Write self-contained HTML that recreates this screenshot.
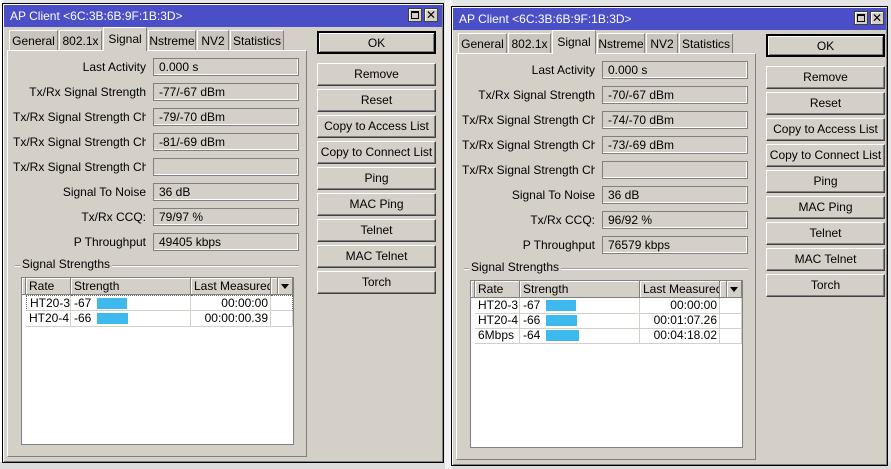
<!DOCTYPE html>
<html><head><meta charset="utf-8"><style>
*{box-sizing:border-box;margin:0;padding:0}
body{width:891px;height:469px;overflow:hidden;background:#e6e6e6;position:relative;font-family:"Liberation Sans","DejaVu Sans",sans-serif;font-size:11px;color:#000}
.win{position:absolute;width:442px;height:460px;background:#d4d0c8;border:1px solid #000;box-shadow:inset 1px 1px 0 #fff,inset -1px -1px 0 #808080}
.win div{position:absolute}
.tb{left:1px;top:1px;right:1px;height:22px;background:#4b4fc7;color:#fff;font-size:12px;line-height:22px;padding-left:6px}
.tbb{top:4px;width:14px;height:14px;background:#d4d0c8;border:1px solid #404040;box-shadow:inset 1px 1px 0 #fff}
.tab{top:26px;height:21px;background:#c9c5bd;border:1px solid #fff;border-right-color:#808080;border-bottom:none;line-height:20px;text-align:center;font-size:12px}
.tab.sel{top:23px;height:24px;background:#d4d0c8;z-index:2;line-height:22px}
.panel{left:4px;top:46px;width:300px;height:407px;border:1px solid #fff;border-right-color:#808080;border-bottom-color:#808080}
.lbl{left:10px;width:133px;text-align:right;white-space:nowrap;overflow:hidden;height:18px;line-height:18px;font-size:12px}
.fld{left:150px;width:146px;height:18px;border:1px solid #808080;box-shadow:inset -1px -1px 0 #fff;line-height:16px;padding-left:5px;font-size:12px}
.btn{left:314px;width:119px;height:23px;border:1px solid #fff;border-right-color:#404040;border-bottom-color:#404040;box-shadow:inset -1px -1px 0 #808080;text-align:center;line-height:21px;font-size:12px}
.btn.ok{border:2px solid #000;box-shadow:inset 1px 1px 0 #fff,inset -1px -1px 0 #808080}
.grp{left:12px;top:261px;width:284px;height:1px;background:#a0a0a0;box-shadow:0 1px 0 #fff}
.grpt{left:17px;top:253px;background:#d4d0c8;padding:0 2px;font-size:12px}
.tbl{left:18px;top:273px;width:273px;height:168px;background:#fff;border:1px solid #808080}
.hd{top:0;height:17px;background:#d4d0c8;border-right:1px solid #808080;border-bottom:1px solid #808080;box-shadow:inset 1px 1px 0 #fff;line-height:16px;padding-left:3px;font-size:12px;white-space:nowrap;overflow:hidden}
.c{height:16px;line-height:15px;border-right:1px solid #d4d0c8;border-bottom:1px solid #d4d0c8;padding-left:3px;font-size:12px;white-space:nowrap}
.bar{width:30px;height:11px;top:2px;left:26px;background:#3db9ee}
</style></head><body>
<div style="position:absolute;left:0;top:0;width:3px;height:469px;background:#fff"></div>
<div style="position:absolute;left:0;top:462px;width:891px;height:7px;background:#dcdcdc"></div>
<div style="position:absolute;left:445px;top:0;width:7px;height:469px;background:#f2f2f2"></div>

<!-- LEFT WINDOW -->
<div class="win" style="left:2px;top:3px">
<div class="tb">AP Client &lt;6C:3B:6B:9F:1B:3D&gt;</div>
<div class="tbb" style="left:405px"><div style="left:2px;top:2px;width:8px;height:8px;border:1px solid #000;border-top-width:2px"></div></div>
<div class="tbb" style="left:421px;font-weight:bold;font-size:12px;line-height:12px;text-align:center">✕</div>
<div class="tab" style="left:6px;width:49px">General</div>
<div class="tab" style="left:56px;width:43px">802.1x</div>
<div class="tab sel" style="left:100px;width:44px">Signal</div>
<div class="tab" style="left:145px;width:48px">Nstreme</div>
<div class="tab" style="left:194px;width:32px">NV2</div>
<div class="tab" style="left:227px;width:54px">Statistics</div>
<div class="panel"></div>
<div class="lbl" style="top:54px">Last Activity</div><div class="fld" style="top:54px">0.000 s</div>
<div class="lbl" style="top:79px">Tx/Rx Signal Strength</div><div class="fld" style="top:79px">-77/-67 dBm</div>
<div class="lbl" style="top:104px">Tx/Rx Signal Strength Ch</div><div class="fld" style="top:104px">-79/-70 dBm</div>
<div class="lbl" style="top:129px">Tx/Rx Signal Strength Ch</div><div class="fld" style="top:129px">-81/-69 dBm</div>
<div class="lbl" style="top:154px">Tx/Rx Signal Strength Ch</div><div class="fld" style="top:154px"></div>
<div class="lbl" style="top:179px">Signal To Noise</div><div class="fld" style="top:179px">36 dB</div>
<div class="lbl" style="top:204px">Tx/Rx CCQ:</div><div class="fld" style="top:204px">79/97 %</div>
<div class="lbl" style="top:229px">P Throughput</div><div class="fld" style="top:229px">49405 kbps</div>
<div class="grp"></div><div class="grpt">Signal Strengths</div>
<div class="tbl">
<div class="hd" style="left:0;width:4px;padding:0"></div>
<div class="hd" style="left:4px;width:45px">Rate</div>
<div class="hd" style="left:49px;width:120px">Strength</div>
<div class="hd" style="left:169px;width:80px">Last Measured</div>
<div class="hd" style="left:249px;width:7px;padding:0"></div>
<div class="hd" style="left:256px;width:15px;padding:0"><div style="left:3px;top:6px;border-left:4px solid transparent;border-right:4px solid transparent;border-top:5px solid #000"></div></div>
<div class="c" style="left:4px;top:17px;width:45px;border-top:1px dotted #666;border-left:1px dotted #666">HT20-3</div>
<div class="c" style="left:49px;top:17px;width:120px;border-top:1px dotted #666">-67<div class="bar"></div></div>
<div class="c" style="left:169px;top:17px;width:80px;text-align:right;padding-right:2px;border-top:1px dotted #666">00:00:00</div>
<div class="c" style="left:249px;top:17px;width:22px;border-top:1px dotted #666;border-right:1px dotted #666"></div>
<div class="c" style="left:4px;top:33px;width:45px">HT20-4</div>
<div class="c" style="left:49px;top:33px;width:120px">-66<div class="bar" style="width:31px"></div></div>
<div class="c" style="left:169px;top:33px;width:80px;text-align:right;padding-right:2px">00:00:00.39</div>
<div class="c" style="left:249px;top:33px;width:22px"></div>
</div>
<div class="btn ok" style="top:27px">OK</div>
<div class="btn" style="top:59px">Remove</div>
<div class="btn" style="top:85px">Reset</div>
<div class="btn" style="top:111px">Copy to Access List</div>
<div class="btn" style="top:137px">Copy to Connect List</div>
<div class="btn" style="top:163px">Ping</div>
<div class="btn" style="top:189px">MAC Ping</div>
<div class="btn" style="top:215px">Telnet</div>
<div class="btn" style="top:241px">MAC Telnet</div>
<div class="btn" style="top:267px">Torch</div>
</div>

<!-- RIGHT WINDOW -->
<div class="win" style="left:451px;top:6px;width:437px">
<div class="tb">AP Client &lt;6C:3B:6B:9F:1B:3D&gt;</div>
<div class="tbb" style="left:402px"><div style="left:2px;top:2px;width:8px;height:8px;border:1px solid #000;border-top-width:2px"></div></div>
<div class="tbb" style="left:418px;font-weight:bold;font-size:12px;line-height:12px;text-align:center">✕</div>
<div class="tab" style="left:6px;width:49px">General</div>
<div class="tab" style="left:56px;width:43px">802.1x</div>
<div class="tab sel" style="left:100px;width:44px">Signal</div>
<div class="tab" style="left:145px;width:48px">Nstreme</div>
<div class="tab" style="left:194px;width:32px">NV2</div>
<div class="tab" style="left:227px;width:54px">Statistics</div>
<div class="panel"></div>
<div class="lbl" style="top:54px">Last Activity</div><div class="fld" style="top:54px">0.000 s</div>
<div class="lbl" style="top:79px">Tx/Rx Signal Strength</div><div class="fld" style="top:79px">-70/-67 dBm</div>
<div class="lbl" style="top:104px">Tx/Rx Signal Strength Ch</div><div class="fld" style="top:104px">-74/-70 dBm</div>
<div class="lbl" style="top:129px">Tx/Rx Signal Strength Ch</div><div class="fld" style="top:129px">-73/-69 dBm</div>
<div class="lbl" style="top:154px">Tx/Rx Signal Strength Ch</div><div class="fld" style="top:154px"></div>
<div class="lbl" style="top:179px">Signal To Noise</div><div class="fld" style="top:179px">36 dB</div>
<div class="lbl" style="top:204px">Tx/Rx CCQ:</div><div class="fld" style="top:204px">96/92 %</div>
<div class="lbl" style="top:229px">P Throughput</div><div class="fld" style="top:229px">76579 kbps</div>
<div class="grp"></div><div class="grpt">Signal Strengths</div>
<div class="tbl">
<div class="hd" style="left:0;width:4px;padding:0"></div>
<div class="hd" style="left:4px;width:45px">Rate</div>
<div class="hd" style="left:49px;width:120px">Strength</div>
<div class="hd" style="left:169px;width:80px">Last Measured</div>
<div class="hd" style="left:249px;width:7px;padding:0"></div>
<div class="hd" style="left:256px;width:15px;padding:0"><div style="left:3px;top:6px;border-left:4px solid transparent;border-right:4px solid transparent;border-top:5px solid #000"></div></div>
<div class="c" style="left:4px;top:17px;width:45px">HT20-3</div>
<div class="c" style="left:49px;top:17px;width:120px">-67<div class="bar"></div></div>
<div class="c" style="left:169px;top:17px;width:80px;text-align:right;padding-right:2px">00:00:00</div>
<div class="c" style="left:249px;top:17px;width:22px"></div>
<div class="c" style="left:4px;top:32px;width:45px">HT20-4</div>
<div class="c" style="left:49px;top:32px;width:120px">-66<div class="bar" style="width:31px"></div></div>
<div class="c" style="left:169px;top:32px;width:80px;text-align:right;padding-right:2px">00:01:07.26</div>
<div class="c" style="left:249px;top:32px;width:22px"></div>
<div class="c" style="left:4px;top:47px;width:45px">6Mbps</div>
<div class="c" style="left:49px;top:47px;width:120px">-64<div class="bar" style="width:33px"></div></div>
<div class="c" style="left:169px;top:47px;width:80px;text-align:right;padding-right:2px">00:04:18.02</div>
<div class="c" style="left:249px;top:47px;width:22px"></div>
</div>
<div class="btn ok" style="top:27px">OK</div>
<div class="btn" style="top:59px">Remove</div>
<div class="btn" style="top:85px">Reset</div>
<div class="btn" style="top:111px">Copy to Access List</div>
<div class="btn" style="top:137px">Copy to Connect List</div>
<div class="btn" style="top:163px">Ping</div>
<div class="btn" style="top:189px">MAC Ping</div>
<div class="btn" style="top:215px">Telnet</div>
<div class="btn" style="top:241px">MAC Telnet</div>
<div class="btn" style="top:267px">Torch</div>
</div>
</body></html>
